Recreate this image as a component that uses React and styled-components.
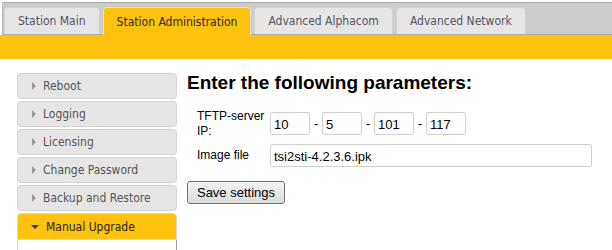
import styled, { createGlobalStyle } from "styled-components";

const GlobalStyle = createGlobalStyle`
  html, body {
    margin: 0;
    padding: 0;
    background: #fff;
    font-family: "DejaVu Sans Condensed", "DejaVu Sans", sans-serif;
  }
`;

const YELLOW = "#fec20f";

const tabs = [
  "Station Main",
  "Station Administration",
  "Advanced Alphacom",
  "Advanced Network",
];

const menu = [
  "Reboot",
  "Logging",
  "Licensing",
  "Change Password",
  "Backup and Restore",
];

const App = () => {
  return (
    <Page>
      <GlobalStyle />
      {/* tab strip and the yellow band */}
      <Header>
        <TabBar>
          {tabs.map((t) => (
            <Tab key={t} $active={t === "Station Administration"}>
              {t}
            </Tab>
          ))}
        </TabBar>
        <Band />
      </Header>

      <Content>
        {/* left menu */}
        <Sidebar>
          {menu.map((m) => (
            <MenuItem key={m}>
              <Arrow />
              {m}
            </MenuItem>
          ))}
          <MenuItem $open>
            <Arrow $down />
            Manual Upgrade
          </MenuItem>
          <OpenPanel />
        </Sidebar>

        {/* form */}
        <Main>
          <Heading>Enter the following parameters:</Heading>
          <Form>
            <Label>
              TFTP-server
              <br />
              IP:
            </Label>
            <IpRow>
              <Field $w={40} defaultValue="10" />
              <Dash>-</Dash>
              <Field $w={40} defaultValue="5" />
              <Dash>-</Dash>
              <Field $w={40} defaultValue="101" />
              <Dash>-</Dash>
              <Field $w={40} defaultValue="117" />
            </IpRow>
            <Label $single>Image file</Label>
            <Field $w={322} defaultValue="tsi2sti-4.2.3.6.ipk" />
          </Form>
          <SaveButton>Save settings</SaveButton>
        </Main>
      </Content>
    </Page>
  );
};

const Page = styled.div`
  width: 612px;
  height: 250px;
  overflow: hidden;
`;

const Header = styled.div`
  padding-top: 2px;
  padding-left: 2px;
`;

const TabBar = styled.div`
  display: flex;
  align-items: flex-end;
  gap: 3px;
  height: 31px;
  padding-left: 1px;
  background: #cccccc;
  border-top: 1px solid #a8a8a8;
  border-left: 1px solid #b8b8b8;
  border-bottom: 1px solid #aaaaaa;
`;

const Tab = styled.div`
  box-sizing: border-box;
  height: ${({ $active }) => ($active ? "28px" : "27px")};
  margin-bottom: ${({ $active }) => ($active ? "-1px" : "0")};
  padding: 0 13px;
  display: flex;
  align-items: center;
  font-size: 12px;
  color: ${({ $active }) => ($active ? "#2a2a2a" : "#555566")};
  background: ${({ $active }) => ($active ? YELLOW : "#e6e6e6")};
  border: 1px solid ${({ $active }) => ($active ? "#e0e0e0" : "#d2d2d2")};
  border-bottom: none;
  border-radius: 4px 4px 0 0;
`;

const Band = styled.div`
  height: 24px;
  margin-left: -2px;
  background: ${YELLOW};
`;

const Content = styled.div`
  display: flex;
  gap: 10px;
  padding: 14px 0 0 17px;
`;

const Sidebar = styled.div`
  width: 160px;
  display: flex;
  flex-direction: column;
  gap: 2px;
`;

const MenuItem = styled.div`
  box-sizing: border-box;
  height: ${({ $open }) => ($open ? "27px" : "26px")};
  display: flex;
  align-items: center;
  gap: 7px;
  padding-left: 14px;
  font-size: 12px;
  color: ${({ $open }) => ($open ? "#222" : "#555")};
  background: ${({ $open }) => ($open ? YELLOW : "#e6e6e6")};
  border: 1px solid ${({ $open }) => ($open ? "#d8d8d8" : "#d4d4d4")};
  border-radius: ${({ $open }) => ($open ? "4px 4px 0 0" : "4px")};
`;

const Arrow = styled.span`
  width: 0;
  height: 0;
  ${({ $down }) =>
    $down
      ? `
    border-left: 4px solid transparent;
    border-right: 4px solid transparent;
    border-top: 4px solid #333;
    margin-left: -1px;
  `
      : `
    border-top: 4px solid transparent;
    border-bottom: 4px solid transparent;
    border-left: 4px solid #999;
  `}
`;

const OpenPanel = styled.div`
  margin-top: -2px;
  height: 40px;
  border-left: 1px solid #d0d0d0;
  border-right: 1px solid #a0a0a0;
  background: #fff;
`;

const Main = styled.div`
  flex: 1;
`;

const Heading = styled.h1`
  margin: -2px 0 0;
  font-family: "Liberation Sans", Arial, sans-serif;
  font-size: 19px;
  font-weight: bold;
  color: #000;
  line-height: 24px;
`;

const Form = styled.div`
  display: grid;
  grid-template-columns: 73px auto;
  row-gap: 5px;
  align-items: center;
  margin: 13px 0 0 10px;
  font-family: "Liberation Sans", Arial, sans-serif;
  font-size: 13px;
  color: #000;
`;

const Label = styled.div`
  white-space: nowrap;
  font-size: 12px;
  line-height: 15px;
  padding-top: ${({ $single }) => ($single ? "0" : "1px")};
`;

const IpRow = styled.div`
  display: flex;
  align-items: center;
  gap: 4px;
`;

const Dash = styled.span`
  width: 4px;
  text-align: center;
`;

const Field = styled.input`
  box-sizing: border-box;
  width: ${({ $w }) => $w}px;
  height: 23px;
  padding: 2px 3px 0;
  border: 1px solid #cfcfcf;
  border-radius: 2px;
  font-family: "Liberation Sans", Arial, sans-serif;
  font-size: 13px;
  color: #000;
  background: #fff;
  outline: none;
`;

const SaveButton = styled.button`
  margin-top: 14px;
  box-sizing: border-box;
  width: 98px;
  height: 23px;
  padding: 0;
  font-family: "Liberation Sans", Arial, sans-serif;
  font-size: 13px;
  color: #000;
  background: linear-gradient(#f4f4f4, #dcdcdc);
  border: 1px solid #707070;
  border-radius: 3px;
`;

export default App;
